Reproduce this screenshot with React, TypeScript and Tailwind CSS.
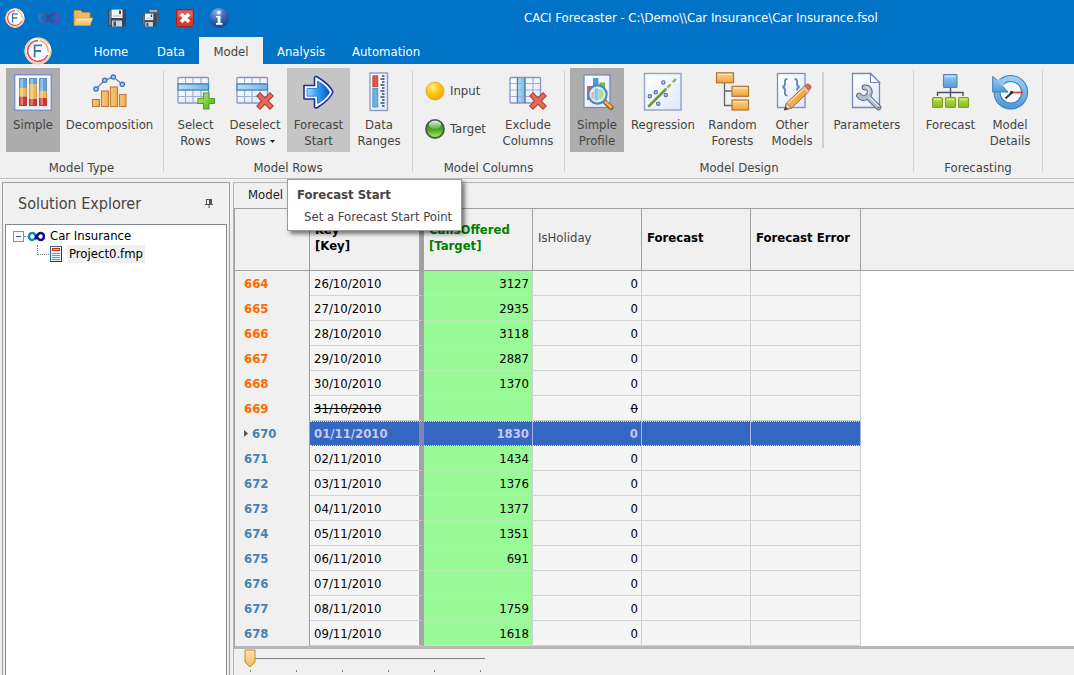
import React from "react";

type IconProps = { children: React.ReactNode };

function Icon40({ children }: IconProps) {
  return (
    <svg viewBox="0 0 40 40" className="h-10 w-10 shrink-0" fill="none" aria-hidden="true">
      {children}
    </svg>
  );
}

function Icon24({ children }: IconProps) {
  return (
    <svg viewBox="0 0 24 24" className="h-6 w-6" fill="none" aria-hidden="true">
      {children}
    </svg>
  );
}

function Gradients() {
  return (
    <svg className="absolute h-0 w-0" aria-hidden="true">
      <defs>
        <linearGradient id="page" x1="0" y1="0" x2="1" y2="1">
          <stop offset="0" stopColor="#ffffff" />
          <stop offset="1" stopColor="#dfe9f8" />
        </linearGradient>
        <linearGradient id="orange" x1="0" y1="0" x2="0" y2="1">
          <stop offset="0" stopColor="#fbd28a" />
          <stop offset="0.5" stopColor="#f5bd62" />
          <stop offset="1" stopColor="#eca23c" />
        </linearGradient>
        <linearGradient id="orangeH" x1="0" y1="0" x2="1" y2="0">
          <stop offset="0" stopColor="#f6c880" />
          <stop offset="1" stopColor="#f0b04c" />
        </linearGradient>
        <linearGradient id="blue" x1="0" y1="0" x2="0" y2="1">
          <stop offset="0" stopColor="#9bcdf3" />
          <stop offset="1" stopColor="#559ad6" />
        </linearGradient>
        <linearGradient id="sky" x1="0" y1="0" x2="1" y2="0">
          <stop offset="0" stopColor="#b9e0f4" />
          <stop offset="1" stopColor="#74b3e0" />
        </linearGradient>
        <linearGradient id="lime" x1="0" y1="0" x2="0" y2="1">
          <stop offset="0" stopColor="#bfe04a" />
          <stop offset="1" stopColor="#86b81c" />
        </linearGradient>
        <linearGradient id="plus" x1="0" y1="0" x2="1" y2="1">
          <stop offset="0" stopColor="#b4ec6c" />
          <stop offset="1" stopColor="#4fae1c" />
        </linearGradient>
        <linearGradient id="arrow" x1="0" y1="0" x2="1" y2="0">
          <stop offset="0" stopColor="#8fdcff" />
          <stop offset="0.5" stopColor="#2f9af0" />
          <stop offset="1" stopColor="#0a52cc" />
        </linearGradient>
        <radialGradient id="yellowBall" cx="0.38" cy="0.3" r="0.75">
          <stop offset="0" stopColor="#fff08a" />
          <stop offset="0.45" stopColor="#ffc917" />
          <stop offset="1" stopColor="#f3a300" />
        </radialGradient>
        <linearGradient id="greenBall" x1="0" y1="0" x2="0" y2="1">
          <stop offset="0" stopColor="#2c7f16" />
          <stop offset="0.55" stopColor="#4aa81f" />
          <stop offset="1" stopColor="#b2f26c" />
        </linearGradient>
        <linearGradient id="gloss" x1="0" y1="0" x2="0" y2="1">
          <stop offset="0" stopColor="#ffffff" stopOpacity="0.9" />
          <stop offset="1" stopColor="#ffffff" stopOpacity="0.15" />
        </linearGradient>
        <radialGradient id="infoBall" cx="0.4" cy="0.2" r="0.9">
          <stop offset="0" stopColor="#8fb2e6" />
          <stop offset="0.5" stopColor="#2f64b4" />
          <stop offset="1" stopColor="#173a80" />
        </radialGradient>
        <linearGradient id="folder" x1="0" y1="0" x2="0" y2="1">
          <stop offset="0" stopColor="#fbe6b4" />
          <stop offset="1" stopColor="#f0b860" />
        </linearGradient>
        <linearGradient id="loop" x1="0" y1="0" x2="1" y2="0">
          <stop offset="0" stopColor="#3a74bc" />
          <stop offset="0.5" stopColor="#2f4a98" />
          <stop offset="1" stopColor="#6246b4" />
        </linearGradient>
      </defs>
    </svg>
  );
}

function FLogo() {
  return (
    <svg viewBox="0 0 28 28" className="h-full w-full" fill="none" aria-hidden="true">
      <circle cx="14" cy="14" r="13.5" fill="#fff" />
      <circle cx="14" cy="14" r="12.6" stroke="#f4c98c" strokeWidth="1.6" strokeDasharray="50 8 14 7" />
      <path d="M14 3.6A10.4 10.4 0 1 0 23.6 18" stroke="#e2457e" strokeWidth="1.6" />
      <path d="M16 3.8A10.4 10.4 0 0 1 24.3 15" stroke="#f2a36a" strokeWidth="1.4" />
      <path d="M10.6 20.5V8.3H18M10.6 14H17" stroke="#3f75a8" strokeWidth="1.8" />
    </svg>
  );
}

function LoopIcon() {
  return (
    <Icon24>
      <path
        d="M12 12C10 9 8.500 7.800 6.500 7.800A4 4 0 0 0 6.500 15.800C9 15.800 10.500 13.800 12 11.800C13.500 9.800 15 7.800 17.500 7.800A4 4 0 0 1 17.500 15.800C15.500 15.800 14 14.500 12 12Z"
        stroke="url(#loop)"
        strokeWidth="3.200"
      />
    </Icon24>
  );
}

function FolderIcon() {
  return (
    <Icon24>
      <path d="M3 19V4.500H9.500L11.500 6.500H19V19Z" fill="#eebb62" stroke="#c98a2c" strokeWidth="0.800" />
      <path d="M5 12H22L19 19.600H3Z" fill="url(#folder)" stroke="#d49b40" strokeWidth="0.600" />
    </Icon24>
  );
}

function Floppy() {
  return (
    <>
      <path d="M3 3.500H21V20.500H4.500L3 19Z" fill="#3c4654" />
      <path d="M4 4.500H6V19H4Z" fill="#5c7ca4" />
      <path d="M6.500 3.500H17.500V12H6.500Z" fill="#f3f5f7" />
      <path d="M14 4.500H16V8H14Z" fill="#3c4654" />
      <path d="M8 10H16.500" stroke="#a9b6c6" />
      <path d="M7 14.500H17V20.500H7Z" fill="#c9d3de" />
      <path d="M8.500 15.500H11V20H8.500Z" fill="#39506c" />
    </>
  );
}

function SaveAllIcon() {
  return (
    <Icon24>
      <path d="M8.500 4H20.500V16.500H17V8H8.500Z" fill="#4a5a70" />
      <path d="M10.500 4H18V6H10.500Z" fill="#9fb4cc" />
      <g transform="translate(1 5) scale(0.76)">
        <Floppy />
      </g>
    </Icon24>
  );
}

function CloseIcon() {
  return (
    <Icon24>
      <rect x="3.500" y="3.500" width="17" height="17" rx="1" fill="#d4392d" stroke="#a8221a" />
      <rect x="4.500" y="4.500" width="15" height="7" fill="#fff" opacity="0.2" />
      <path d="M8 8L16 16M16 8L8 16" stroke="#fff" strokeWidth="3.600" />
    </Icon24>
  );
}

function InfoIcon() {
  return (
    <Icon24>
      <circle cx="12" cy="12" r="10" fill="url(#infoBall)" />
      <circle cx="12" cy="6.500" r="1.900" fill="#fff" />
      <path d="M9 10H13.500V17H15.500V18.800H9V17H10.700V11.500H9Z" fill="#fff" />
    </Icon24>
  );
}

const stacks: [number, number, number][] = [
  [6, 16, 24.5],
  [16, 12.5, 27],
  [26, 19, 26],
];

function SimpleIcon() {
  return (
    <Icon40>
      <rect x="1.700" y="2.700" width="36.600" height="35.600" rx="0.500" fill="#fff" stroke="#7c92cc" strokeWidth="1.500" />
      <rect x="3.500" y="4.500" width="33" height="32" fill="url(#page)" />
      {stacks.map(([x, a, b]) => (
        <g key={x}>
          <rect x={x} y="6" width="8" height={a - 6} fill="#5fa6da" />
          <rect x={x} y={a} width="8" height={b - a} fill="#f0b850" />
          <rect x={x} y={b} width="8" height={34 - b} fill="#cc3a30" />
          <rect x={x + 1.5} y="7" width="2.500" height="26" fill="#fff" opacity="0.35" />
          <rect x={x + 0.4} y="6.400" width="7.200" height="27.200" rx="0.800" stroke="#854a3a" strokeOpacity="0.35" strokeWidth="0.800" />
        </g>
      ))}
    </Icon40>
  );
}

function DecompositionIcon() {
  return (
    <Icon40>
      <path d="M6 17L14.700 8.300L23.300 5L32.300 12.300" stroke="#76839f" strokeWidth="1.400" />
      {[[6, 17], [14.7, 8.3], [23.3, 5], [32.3, 12.3]].map(([x, y]) => (
        <circle key={x} cx={x} cy={y} r="2.200" fill="#9cc6ee" stroke="#416fb4" strokeWidth="1.200" />
      ))}
      <g fill="url(#orangeH)" stroke="#c07a3c" strokeWidth="1.100">
        <rect x="2.500" y="27.500" width="7" height="7" />
        <rect x="11.500" y="19" width="7" height="15.500" />
        <rect x="20.500" y="15" width="7" height="19.500" />
        <rect x="29.500" y="22.500" width="6.500" height="12" />
      </g>
    </Icon40>
  );
}

function TableGrid({ column }: { column?: boolean }) {
  return (
    <>
      <rect x="2" y="5.500" width="30.500" height="25.500" rx="1" fill="url(#page)" />
      {column ? <rect x="9.500" y="5.500" width="7.500" height="25.500" fill="url(#sky)" /> : null}
      <path d="M9.500 5.500V31M17 5.500V31M25 5.500V31M2 11.500H32M2 18H32M2 24.500H32" stroke="#a3afd2" strokeWidth="1.200" />
      <rect x="2" y="5.500" width="30.500" height="25.500" rx="1" stroke="#8795c4" strokeWidth="1.300" />
      {column ? (
        <path d="M9.500 5.500V31M17 5.500V31" stroke="#3c86b8" strokeWidth="1.300" />
      ) : (
        <rect x="2" y="12" width="30.500" height="6" fill="url(#sky)" stroke="#3c86b8" strokeWidth="1.200" />
      )}
    </>
  );
}

function RedCross() {
  return (
    <>
      <path d="M25 24L35 34M35 24L25 34" stroke="#b5392c" strokeWidth="5.600" strokeLinecap="square" />
      <path d="M25 24L35 34M35 24L25 34" stroke="#e46a58" strokeWidth="3.600" strokeLinecap="square" />
    </>
  );
}

function SelectRowsIcon() {
  return (
    <Icon40>
      <TableGrid />
      <path d="M27.500 21H33V26.500H38.500V31.500H33V37H27.500V31.500H22V26.500H27.500Z" fill="url(#plus)" stroke="#58a02c" strokeWidth="1.100" />
    </Icon40>
  );
}

function DeselectRowsIcon() {
  return (
    <Icon40>
      <TableGrid />
      <RedCross />
    </Icon40>
  );
}

function ExcludeColumnsIcon() {
  return (
    <Icon40>
      <TableGrid column />
      <RedCross />
    </Icon40>
  );
}

function ForecastStartIcon() {
  return (
    <Icon40>
      <path
        d="M5 13.500H15.500V5.500C16 4.300 17 4.200 18.500 5C25 9 31 13 34 20C31 27 25 31.500 18.500 35.500C17 36.200 16 36 15.500 35V27H5Z"
        fill="#fff"
        stroke="#1d2f9c"
        strokeWidth="1.600"
        strokeLinejoin="round"
      />
      <path d="M8 16.500H18.500V9C24 12 28.500 15.500 30.500 20.200C28.500 25 24 28.500 18.500 31.500V24.200H8Z" fill="url(#arrow)" stroke="#1559c8" strokeWidth="0.700" />
    </Icon40>
  );
}

function DataRangesIcon() {
  return (
    <Icon40>
      <rect x="11" y="1" width="17.500" height="37.500" fill="url(#page)" stroke="#8396c8" strokeWidth="1.300" />
      <rect x="13.800" y="3.800" width="5" height="11" fill="#d95a48" stroke="#b8402f" strokeWidth="0.800" />
      <rect x="13.800" y="16.500" width="5" height="18.500" fill="#6fb0e2" stroke="#4a8cc4" strokeWidth="0.800" />
      <path
        d="M23 4H25.500M21.500 7H25.500M23 10H25.500M21.500 13H25.500M23 16H25.500M21.500 19H25.500M23 22H25.500M21.500 25H25.500M23 28H25.500M21.500 31H25.500M23 34H25.500"
        stroke="#3c4660"
        strokeWidth="1.300"
      />
    </Icon40>
  );
}

function SimpleProfileIcon() {
  return (
    <Icon40>
      <rect x="7" y="3" width="26" height="32.500" fill="url(#page)" stroke="#7088bc" strokeWidth="1.200" />
      <rect x="10" y="14" width="5.500" height="14" fill="#d9604e" />
      <rect x="16" y="6" width="5.500" height="16" fill="#4f9ad2" />
      <rect x="22.500" y="10.500" width="5.500" height="12" fill="#7ab83c" />
      <path d="M27.500 29.500L34 35.500" stroke="#8b5a24" strokeWidth="5" strokeLinecap="round" />
      <path d="M28.500 30L33.800 35" stroke="#eeb05a" strokeWidth="3" strokeLinecap="round" />
      <circle cx="20.500" cy="22.500" r="9" fill="#e8f4fc" fillOpacity="0.92" stroke="#5a80b8" strokeWidth="2.400" />
      <circle cx="20.500" cy="22.500" r="7.600" stroke="#d5e6f6" strokeWidth="1" />
      <path d="M14.500 20H17V27.500L14.500 25.500Z" fill="#eab0ac" />
      <path d="M17.500 16.500H21.500V28.500H17.500Z" fill="#86c6ea" />
      <path d="M22 17.500H25.500L26.500 21V25L24 27.500H22Z" fill="#b3dc88" />
    </Icon40>
  );
}

function RegressionIcon() {
  return (
    <Icon40>
      <rect x="1.500" y="1.500" width="36.500" height="36.500" fill="url(#page)" stroke="#93a6cc" strokeWidth="1.500" />
      <path d="M6 34L22.500 17.500" stroke="#6c9c34" strokeWidth="2.600" strokeLinecap="round" />
      <path d="M24.500 15.500L34.500 5.500" stroke="#86b84c" strokeWidth="2.400" strokeDasharray="4.500 3" />
      {[[6.8, 24.3], [12.8, 20.3], [20.3, 10.5], [22.8, 23], [15.2, 31.7]].map(([x, y]) => (
        <circle key={x} cx={x} cy={y} r="1.700" fill="#b6c6e6" stroke="#566ea6" strokeWidth="1.100" />
      ))}
    </Icon40>
  );
}

function RandomForestsIcon() {
  return (
    <Icon40>
      <path d="M11.500 11V33.500H19M11.500 19H19" stroke="#5c6470" strokeWidth="1.300" />
      <g fill="url(#orange)" stroke="#b57434" strokeWidth="1.200">
        <rect x="3.500" y="0.800" width="17" height="10" />
        <rect x="19" y="14.300" width="16.500" height="10" />
        <rect x="19" y="28" width="16.500" height="10" />
      </g>
      <path d="M5 2.500H19M20.500 16H34M20.500 29.700H34" stroke="#fde6ba" strokeWidth="1.200" />
    </Icon40>
  );
}

function OtherModelsIcon() {
  return (
    <Icon40>
      <rect x="5.500" y="1.500" width="27.500" height="34" fill="url(#page)" stroke="#7a90c4" strokeWidth="1.300" />
      <path d="M15.500 7C12 7 13 10 13 11.500C13 13.500 12.500 14.500 10.500 15C12.500 15.500 13 16.500 13 18.500C13 20.500 12 23.500 15.500 23.500" stroke="#6b87b4" strokeWidth="1.900" />
      <path d="M22.500 7C26 7 25 10 25 11.500C25 13.500 25.500 14.500 27.500 15C25.500 15.500 25 16.500 25 18.500" stroke="#6b87b4" strokeWidth="1.900" />
      <path d="M12.500 38L14.500 31L32 14.500L37 19.500L19.500 36Z" fill="#f2a94a" stroke="#a9682c" />
      <path d="M15.500 32L32.500 16" stroke="#fcd896" strokeWidth="1.600" />
      <path d="M12.500 38L14.500 31L19.500 36Z" fill="#e8d4b8" stroke="#6a5040" strokeWidth="0.700" />
      <path d="M12.500 38L13.400 34.500L16 37Z" fill="#30343c" />
      <path d="M30.500 16L33 13.500L38 18.500L35.500 21Z" fill="#c4cbd4" />
      <path d="M32.500 14L35 12Q36.500 11.500 38 13Q39.500 14.500 39 16L37 18.500Z" fill="#e0645a" stroke="#b0403a" strokeWidth="0.600" />
    </Icon40>
  );
}

function ParametersIcon() {
  return (
    <Icon40>
      <path d="M5.500 1.500H23.500L32.500 10.500V35.500H5.500Z" fill="url(#page)" stroke="#7488b4" strokeWidth="1.300" />
      <path d="M23.500 1.500V10.500H32.500Z" fill="#fff" stroke="#7488b4" strokeWidth="1.200" />
      <g strokeLinejoin="round" strokeLinecap="round">
        <path d="M17.500 15.500C22 15 24 19 22 22.500C20 26.500 15 27.500 12 23.500M21 25L31.500 35.500" stroke="#5f6b80" strokeWidth="5.800" />
        <path d="M17.500 15.500C22 15 24 19 22 22.500C20 26.500 15 27.500 12 23.500M21 25L31.500 35.500" stroke="#b4becc" strokeWidth="3.800" />
        <path d="M19 15.200C22 16 23 19 21.500 21.500M22.500 25L32 34.500" stroke="#e2e8f0" strokeWidth="1.200" />
      </g>
      <circle cx="31.500" cy="35.500" r="1.100" fill="#667288" />
    </Icon40>
  );
}

function ForecastIcon() {
  return (
    <Icon40>
      <path d="M19.500 15V25M6.500 24V20.500H32V24" stroke="#4a5066" strokeWidth="1.400" />
      <rect x="12.500" y="2.500" width="13.500" height="13" rx="0.800" fill="url(#blue)" stroke="#4a88c0" strokeWidth="1.100" />
      <g fill="url(#lime)" stroke="#7fa026" strokeWidth="1.100">
        <rect x="1.500" y="25.500" width="10" height="10" rx="1" />
        <rect x="14.500" y="25.500" width="10" height="10" rx="1" />
        <rect x="27.500" y="25.500" width="10" height="10" rx="1" />
      </g>
      <path d="M3 27.500H10M16 27.500H23M29 27.500H36M14 4.500H24.500" stroke="#fff" strokeOpacity="0.4" strokeWidth="1.500" />
    </Icon40>
  );
}

function ModelDetailsIcon() {
  return (
    <Icon40>
      <circle cx="20.800" cy="20.300" r="13.800" fill="#f6fafe" stroke="#397fba" strokeWidth="7" />
      <circle cx="20.800" cy="20.300" r="13.800" stroke="url(#blue)" strokeWidth="5" />
      <path d="M2.700 4.500L7.500 8.500L13 14.500L18 20H2.700Z" fill="url(#blue)" stroke="#397fba" strokeWidth="1" strokeLinejoin="round" />
      <path d="M6.500 8.500L10 6.500L15 12L12 14.500Z" fill="#8fc4ee" />
      <path d="M21.500 20.500H33" stroke="#e03c30" strokeWidth="1.700" />
      <path d="M22.500 20L15.500 26.500" stroke="#343c48" strokeWidth="2" />
      <circle cx="21.500" cy="20.500" r="1.700" fill="#343c48" />
    </Icon40>
  );
}

type RibbonButtonProps = {
  icon: React.ReactNode;
  lines: string[];
  className: string;
  dropdown?: boolean;
};

function RibbonButton({ icon, lines, className, dropdown }: RibbonButtonProps) {
  return (
    <button type="button" className={`flex h-[84px] shrink-0 flex-col items-center pt-1 leading-4 text-[#444] ${className}`}>
      {icon}
      <span className="mt-[5px] flex flex-col items-center whitespace-nowrap">
        {lines.map((line, i) => (
          <span key={line} className="flex items-center gap-1">
            {line}
            {dropdown && i === lines.length - 1 ? (
              <svg viewBox="0 0 5 3" className="h-[3px] w-[5px]" aria-hidden="true">
                <path d="M0 0H5L2.500 3Z" fill="#222" />
              </svg>
            ) : null}
          </span>
        ))}
      </span>
    </button>
  );
}

function RibbonGroup({ title, className, children }: { title: string; className: string; children: React.ReactNode }) {
  return (
    <section className={`flex shrink-0 flex-col pt-1 ${className}`}>
      <div className="relative flex h-[84px]">{children}</div>
      <h2 className="mt-2 text-center leading-4 text-[#444]">{title}</h2>
    </section>
  );
}

function GroupLine() {
  return <div className="my-1.5 w-px shrink-0 bg-[#d2d2d2]" />;
}

const quickActions = [
  { label: "Open", icon: <FolderIcon /> },
  { label: "Save", icon: <Icon24><Floppy /></Icon24> },
  { label: "Save all", icon: <SaveAllIcon /> },
  { label: "Close", icon: <CloseIcon /> },
  { label: "Information", icon: <InfoIcon /> },
];

function TitleBar() {
  return (
    <header className="bg-[#0173c7] text-white">
      <div className="flex h-9 items-center pl-[3px]">
        <div className="flex items-center gap-[10px]">
          <span className="flex h-6 w-6 items-center justify-center">
            <span className="h-5 w-5"><FLogo /></span>
          </span>
          <LoopIcon />
          {quickActions.map((action) => (
            <button key={action.label} type="button" aria-label={action.label} className="h-6 w-6">
              {action.icon}
            </button>
          ))}
        </div>
        <h1 className="flex-1 whitespace-nowrap pl-[293px]">CACI Forecaster - C:\Demo\\Car Insurance\Car Insurance.fsol</h1>
      </div>
      <nav className="mt-px flex h-[27px] items-stretch">
        <button type="button" aria-label="Application menu" className="relative z-10 ml-6 mr-[27px] h-7 w-7 shrink-0">
          <FLogo />
        </button>
        <button type="button" className="w-16 pt-0.5">Home</button>
        <button type="button" className="w-14 pt-0.5">Data</button>
        <button type="button" className="w-16 bg-[#f0f0f0] pt-0.5 text-[#444]">Model</button>
        <button type="button" className="w-[76px] pt-0.5">Analysis</button>
        <button type="button" className="w-[94px] pt-0.5">Automation</button>
      </nav>
    </header>
  );
}

function Ribbon() {
  return (
    <div className="flex h-[115px] border-b border-[#c0c0c0] bg-[#f0f0f0]">
      <RibbonGroup title="Model Type" className="w-[163px]">
        <RibbonButton icon={<SimpleIcon />} lines={["Simple"]} className="ml-1.5 w-[54px] bg-[#acacac]" />
        <RibbonButton icon={<DecompositionIcon />} lines={["Decomposition"]} className="w-[99px]" />
      </RibbonGroup>
      <GroupLine />
      <RibbonGroup title="Model Rows" className="w-[248px]">
        <RibbonButton icon={<SelectRowsIcon />} lines={["Select", "Rows"]} className="ml-1 w-[55px]" />
        <RibbonButton icon={<DeselectRowsIcon />} lines={["Deselect", "Rows"]} dropdown className="w-16" />
        <div className="relative">
          <RibbonButton icon={<ForecastStartIcon />} lines={["Forecast", "Start"]} className="w-[63px] bg-[#c5c5c5]" />
          <div role="tooltip" className="absolute left-0 top-[111px] z-20 h-[52px] w-[175px] whitespace-nowrap border border-[#9a9a9a] bg-white px-[9px] pt-[7px] text-[#444] shadow-[3px_3px_4px_rgba(0,0,0,0.5)]">
            <p className="font-bold leading-4">Forecast Start</p>
            <p className="mt-1.5 pl-[7px] leading-4">Set a Forecast Start Point</p>
          </div>
        </div>
        <RibbonButton icon={<DataRangesIcon />} lines={["Data", "Ranges"]} className="w-[58px]" />
      </RibbonGroup>
      <GroupLine />
      <RibbonGroup title="Model Columns" className="w-[151px]">
        <div className="ml-[11px] flex w-[75px] flex-col gap-3.5 pt-[11px] text-[#444]">
          <button type="button" className="flex h-6 items-center gap-0.5">
            <Icon24>
              <circle cx="11" cy="12" r="9" fill="url(#yellowBall)" stroke="#dda42c" strokeWidth="0.800" />
            </Icon24>
            Input
          </button>
          <button type="button" className="flex h-6 items-center gap-0.5">
            <Icon24>
              <circle cx="11" cy="12" r="9" fill="url(#greenBall)" stroke="#4c5a4c" strokeWidth="1.800" />
              <ellipse cx="11" cy="7.800" rx="6.200" ry="4" fill="url(#gloss)" />
            </Icon24>
            Target
          </button>
        </div>
        <RibbonButton icon={<ExcludeColumnsIcon />} lines={["Exclude", "Columns"]} className="w-[58px]" />
      </RibbonGroup>
      <GroupLine />
      <RibbonGroup title="Model Design" className="w-[348px]">
        <RibbonButton icon={<SimpleProfileIcon />} lines={["Simple", "Profile"]} className="ml-[5px] w-[54px] bg-[#acacac]" />
        <RibbonButton icon={<RegressionIcon />} lines={["Regression"]} className="w-[78px]" />
        <RibbonButton icon={<RandomForestsIcon />} lines={["Random", "Forests"]} className="w-[61px]" />
        <RibbonButton icon={<OtherModelsIcon />} lines={["Other", "Models"]} className="w-[58px]" />
        <div className="my-1 ml-px w-0.5 bg-[#cfcfcf]" />
        <RibbonButton icon={<ParametersIcon />} lines={["Parameters"]} className="w-[86px]" />
      </RibbonGroup>
      <GroupLine />
      <RibbonGroup title="Forecasting" className="w-[128px]">
        <RibbonButton icon={<ForecastIcon />} lines={["Forecast"]} className="ml-1.5 w-[61px]" />
        <RibbonButton icon={<ModelDetailsIcon />} lines={["Model", "Details"]} className="w-[58px]" />
      </RibbonGroup>
      <GroupLine />
    </div>
  );
}

function SolutionExplorer() {
  return (
    <aside className="ml-0.5 mt-[3px] flex w-[228px] shrink-0 flex-col border border-b-0 border-[#a0a0a0] px-0.5">
      <div className="flex h-[41px] items-center justify-between pl-[13px] pr-3.5">
        <h2 className="text-base text-[#444]">Solution Explorer</h2>
        <button type="button" aria-label="Pin panel">
          <svg viewBox="0 0 8 9" className="h-[9px] w-2" aria-hidden="true">
            <path d="M1 0H7V5H8V6H4.500V9H3.500V6H0V5H1Z" fill="#555" />
            <path d="M2 1H4V5H2Z" fill="#f0f0f0" />
          </svg>
        </button>
      </div>
      <div className="flex-1 border border-b-0 border-[#828790] bg-white pt-0.5 text-black">
        <div className="flex h-[18px] items-center pl-[7px]">
          <button type="button" aria-label="Collapse Car Insurance" className="h-[11px] w-[11px]">
            <svg viewBox="0 0 11 11" className="h-full w-full" aria-hidden="true">
              <rect x="0.500" y="0.500" width="10" height="10" fill="#f8f8f8" stroke="#919191" />
              <path d="M3 5.500H8" stroke="#3a56a4" />
            </svg>
          </button>
          <span className="w-1 border-t border-dotted border-[#808080]" />
          <svg viewBox="0 0 17 11" className="h-[11px] w-[17px]" fill="none" aria-hidden="true">
            <path d="M8.500 5.500C7 3 6 2 4.500 2A3.300 3.300 0 0 0 4.500 9C6.500 9 7.500 7 8.500 5.500" stroke="#178ab8" strokeWidth="2.600" />
            <path d="M7 8C8.500 7 9.500 2 12.500 2A3.300 3.300 0 0 1 12.500 9C10.500 9 9.500 7 7.500 4" stroke="#10108c" strokeWidth="2.600" />
          </svg>
          <span className="ml-[5px]">Car Insurance</span>
        </div>
        <div className="flex h-[18px] items-center pl-[31px]">
          <span className="mb-2 h-2.5 w-3 border-b border-l border-dotted border-[#808080]" />
          <svg viewBox="0 0 14 16" className="h-4 w-3.5" fill="none" aria-hidden="true">
            <rect x="1.500" y="0.500" width="11" height="15" fill="#e6f7ff" stroke="#2a6a90" />
            <path d="M12.500 1V15.500H1.500" stroke="#26384c" />
            <rect x="3" y="2" width="8" height="3" fill="#d22a10" />
            <rect x="4" y="3" width="6" height="1" fill="#ffd400" />
            <path d="M3 7.500H11M3 9.500H11M3 11.500H11M3 13.500H11" stroke="#5c9cc4" />
          </svg>
          <span className="ml-1 bg-[#f0f0f0] px-0.5 leading-[18px]">Project0.fmp</span>
        </div>
      </div>
    </aside>
  );
}

type Row = { id: number; date: string; calls: string; past?: boolean; struck?: boolean; current?: boolean };

const rows: Row[] = [
  { id: 664, date: "26/10/2010", calls: "3127", past: true },
  { id: 665, date: "27/10/2010", calls: "2935", past: true },
  { id: 666, date: "28/10/2010", calls: "3118", past: true },
  { id: 667, date: "29/10/2010", calls: "2887", past: true },
  { id: 668, date: "30/10/2010", calls: "1370", past: true },
  { id: 669, date: "31/10/2010", calls: "", past: true, struck: true },
  { id: 670, date: "01/11/2010", calls: "1830", current: true },
  { id: 671, date: "02/11/2010", calls: "1434" },
  { id: 672, date: "03/11/2010", calls: "1376" },
  { id: 673, date: "04/11/2010", calls: "1377" },
  { id: 674, date: "05/11/2010", calls: "1351" },
  { id: 675, date: "06/11/2010", calls: "691" },
  { id: 676, date: "07/11/2010", calls: "" },
  { id: 677, date: "08/11/2010", calls: "1759" },
  { id: 678, date: "09/11/2010", calls: "1618" },
];

function DataRow({ row }: { row: Row }) {
  const base = row.current
    ? "border-y border-dotted border-y-[#e4e2fa] bg-[#3467bf] font-bold text-[#c9c6f2] pb-0 pt-px"
    : "border-b border-b-[#d0d0d0] bg-[#f5f5f5] text-black pb-0 pt-px";
  const line = row.current ? "border-r [border-right-style:solid] border-r-[#a9b4e6]" : "border-r border-r-[#d0d0d0]";
  const thick = row.current ? "border-r-[5px] [border-right-style:solid] border-r-[#8583b4]" : "border-r-[5px] border-r-[#a5a5a5]";
  const calls = row.current ? base : "border-b border-b-[#b4eeb4] bg-[#98fb98] text-black pb-0 pt-px";
  const strike = row.struck ? "line-through" : "";
  return (
    <tr className="h-[25px]">
      <th scope="row" className={`border-r border-r-[#a0a0a0] bg-[#f0f0f0] p-0 text-left font-bold ${row.past ? "text-[#ff6a00]" : "text-[#4682b4]"}`}>
        <span className="flex items-center pl-[9px]">
          {row.current ? (
            <svg viewBox="0 0 4 7" className="mr-1 h-[7px] w-1" aria-hidden="true">
              <path d="M0 0L4 3.500L0 7Z" fill="#555" />
            </svg>
          ) : null}
          {row.id}
        </span>
      </th>
      <td className={`${base} ${thick} ${strike} pl-1 pr-0`}>{row.date}</td>
      <td className={`${calls} ${line} pl-0 pr-[3px] text-right`}>{row.calls}</td>
      <td className={`${base} ${line} ${strike} pl-0 pr-[3px] text-right`}>0</td>
      <td className={`${base} ${line} px-0`} />
      <td className={`${base} ${line} px-0`} />
      <td className="bg-white p-0" />
    </tr>
  );
}

function ModelPanel() {
  const head = "border-b border-r border-[#a0a0a0] bg-[#f0f0f0] pb-[3px] pl-[5px] pr-1 pt-0 text-left leading-4";
  return (
    <main className="ml-[3px] mt-[3px] min-w-0 flex-1 border-l border-t border-[#b4b4b4]">
      <div className="flex h-[25px] items-center pb-0.5 text-[#222]">
        <button type="button" className="flex items-center gap-1 pl-3.5">
          Model
          <span className="h-2 w-2 rounded-full bg-[#f5b942]" />
        </button>
      </div>
      <div className="border-b-[3px] border-l border-t border-[#a0a0a0] border-b-[#b8b8b8] bg-white">
        <table className="w-full table-fixed border-separate border-spacing-0">
          <colgroup>
            <col className="w-[75px]" />
            <col className="w-[114px]" />
            <col className="w-[109px]" />
            <col className="w-[109px]" />
            <col className="w-[109px]" />
            <col className="w-[110px]" />
            <col />
          </colgroup>
          <thead>
            <tr className="h-[62px]">
              <th className={head} aria-label="Row number" />
              <th className={`${head} border-r-[5px] text-black`}>Key<br />[Key]</th>
              <th className={`${head} text-[#008000]`}>CallsOffered<br />[Target]</th>
              <th className={`${head} font-normal text-[#444]`}>IsHoliday</th>
              <th className={`${head} text-black`}>Forecast</th>
              <th className={`${head} text-black`}>Forecast Error</th>
              <th className="border-b border-[#a0a0a0] bg-[#f0f0f0] p-0" aria-label="Empty" />
            </tr>
          </thead>
          <tbody>
            {rows.map((row) => (
              <DataRow key={row.id} row={row} />
            ))}
          </tbody>
        </table>
      </div>
      <div className="flex h-[26px] flex-col pl-[9px]">
        <div className="relative flex h-[18px] w-[242px] items-center">
          <input
            type="range"
            min={0}
            max={5}
            defaultValue={0}
            aria-label="Row position"
            className="h-[18px] w-full appearance-none bg-transparent opacity-0"
          />
          <svg viewBox="0 0 242 18" className="pointer-events-none absolute inset-0 h-full w-full" fill="none" aria-hidden="true">
            <path d="M12 9.500H242" stroke="#808080" />
            <path d="M2 1H12V13L7 18L2 13Z" fill="url(#folder)" stroke="#c88a1c" />
          </svg>
        </div>
        <div className="ml-[7px] flex w-[231px] justify-between">
          {[0, 1, 2, 3, 4, 5].map((tick) => (
            <span key={tick} className="mt-[3px] h-0.5 w-px bg-[#808080]" />
          ))}
        </div>
      </div>
    </main>
  );
}

export default function App() {
  return (
    <div className="flex min-h-screen flex-col overflow-hidden bg-[#f0f0f0] font-['DejaVu_Sans_Condensed','DejaVu_Sans',sans-serif] text-[13px] leading-4">
      <Gradients />
      <TitleBar />
      <Ribbon />
      <div className="flex flex-1">
        <SolutionExplorer />
        <ModelPanel />
      </div>
    </div>
  );
}
